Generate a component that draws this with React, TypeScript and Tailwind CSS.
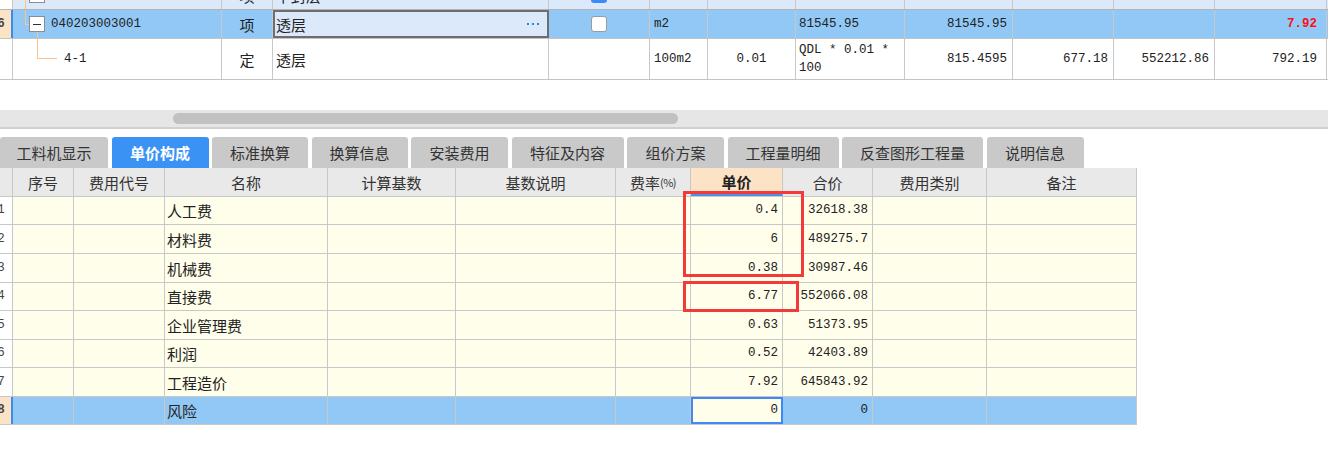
import React from "react";

const MONO = "font-['Liberation_Mono','Noto_Sans_CJK_SC',monospace] text-[12.5px]";
const BR = "border-r border-[#c8c8c8]";

function TreeSvg({ kind }: { kind: 0 | 1 | 2 }) {
  const c = "#f8c68c";
  if (kind === 2)
    return (
      <svg width="51" height="40" className="shrink-0">
        <path d="M24.5 0 V19.5 H44" stroke={c} fill="none" />
      </svg>
    );
  return (
    <svg width="38" height="28" className="shrink-0">
      <path
        d={kind === 0 ? "M12.5 0 V28 M12.5 14.5 H16" : "M12.5 0 V14.5 H16 M24.5 22 V28"}
        stroke={c}
        fill="none"
      />
      <rect x="16.5" y="6.5" width="15" height="15" fill="#fff" stroke="#8c8c8c" />
      <path d="M20 14.5 H28" stroke="#333" />
    </svg>
  );
}

function Idx({ n, sel }: { n: string; sel?: boolean }) {
  return (
    <div
      className={`w-[13px] shrink-0 overflow-hidden flex items-center ${
        sel ? "bg-[#fde3c6] border-r-2 border-[#3c8cf0] font-bold" : "bg-white " + BR
      }`}
    >
      <div className={`w-[30px] -ml-[14px] shrink-0 text-center text-[#444] ${MONO}`}>{n}</div>
    </div>
  );
}

function TopGrid() {
  return (
    <div className="h-[80px] overflow-hidden">
      <div className="-mt-[19px]">
        {/* row 0 (partially visible) */}
        <div className="flex h-[29px] border-b border-[#b4b4b4] bg-[#dce9fb] text-[15px] leading-none">
          <div className={`w-[13px] shrink-0 bg-white ${BR}`} />
          <div className={`w-[209px] shrink-0 flex items-center ${BR}`}>
            <TreeSvg kind={0} />
          </div>
          <div className={`w-[51px] shrink-0 flex items-center justify-center ${BR}`}>项</div>
          <div className={`w-[276px] shrink-0 flex items-center pl-[3px] ${BR}`}>下封层</div>
          <div className={`w-[101px] shrink-0 flex items-center justify-center ${BR}`}>
            <div className="w-[16px] h-[16px] rounded-[3px] bg-[#3d8af7] flex items-center justify-center">
              <svg width="10" height="10" viewBox="0 0 10 10">
                <path d="M1.5 5 L4 7.5 L8.5 2.5" stroke="#fff" strokeWidth="1.6" fill="none" />
              </svg>
            </div>
          </div>
          <div className={`w-[58px] shrink-0 ${BR}`} />
          <div className={`w-[88px] shrink-0 ${BR}`} />
          <div className={`w-[109px] shrink-0 ${BR}`} />
          <div className={`w-[108px] shrink-0 ${BR}`} />
          <div className={`w-[101px] shrink-0 ${BR}`} />
          <div className={`w-[101px] shrink-0 ${BR}`} />
          <div className={`w-[112px] shrink-0 ${BR}`} />
        </div>

        {/* row 1 (selected) */}
        <div className="flex h-[29px] border-b border-[#c4c4c4] bg-[#91c8f6] text-[15px] leading-none text-[#222]">
          <Idx n="6" sel />
          <div className={`w-[209px] shrink-0 flex items-center ${BR}`}>
            <TreeSvg kind={1} />
            <span className={MONO}>040203003001</span>
          </div>
          <div className={`w-[51px] shrink-0 flex items-center justify-center ${BR}`}>项</div>
          <div className="w-[276px] shrink-0 flex items-center justify-between pl-[1px] pr-[8px] bg-[#dce9fb] border-2 border-[#6e6e6e]">
            <span>透层</span>
            <span className="flex gap-[3px]">
              <span className="w-[2px] h-[2px] bg-[#2f86e0]" />
              <span className="w-[2px] h-[2px] bg-[#2f86e0]" />
              <span className="w-[2px] h-[2px] bg-[#2f86e0]" />
            </span>
          </div>
          <div className={`w-[101px] shrink-0 flex items-center justify-center ${BR}`}>
            <div className="w-[16px] h-[16px] rounded-[3px] bg-white border border-[#9a9a9a]" />
          </div>
          <div className={`w-[58px] shrink-0 flex items-center pl-[4px] ${MONO} ${BR}`}>m2</div>
          <div className={`w-[88px] shrink-0 ${BR}`} />
          <div className={`w-[109px] shrink-0 flex items-center pl-[3px] ${MONO} ${BR}`}>81545.95</div>
          <div className={`w-[108px] shrink-0 flex items-center justify-end pr-[5px] ${MONO} ${BR}`}>81545.95</div>
          <div className={`w-[101px] shrink-0 ${BR}`} />
          <div className={`w-[101px] shrink-0 ${BR}`} />
          <div className={`w-[112px] shrink-0 flex items-center justify-end pr-[9px] font-bold text-[#ff1010] ${MONO} ${BR}`}>
            7.92
          </div>
        </div>

        {/* row 2 */}
        <div className="flex h-[41px] border-b border-[#c4c4c4] bg-white text-[15px] leading-none text-[#222]">
          <Idx n="" />
          <div className={`w-[209px] shrink-0 flex items-center ${BR}`}>
            <TreeSvg kind={2} />
            <span className={MONO}>4-1</span>
          </div>
          <div className={`w-[51px] shrink-0 flex items-center justify-center ${BR}`}>定</div>
          <div className={`w-[276px] shrink-0 flex items-center pl-[3px] ${BR}`}>透层</div>
          <div className={`w-[101px] shrink-0 ${BR}`} />
          <div className={`w-[58px] shrink-0 flex items-center pl-[4px] ${MONO} ${BR}`}>100m2</div>
          <div className={`w-[88px] shrink-0 flex items-center justify-center ${MONO} ${BR}`}>0.01</div>
          <div className={`w-[109px] shrink-0 flex flex-col justify-center pl-[3px] leading-[18px] ${MONO} ${BR}`}>
            <span>QDL * 0.01 *</span>
            <span>100</span>
          </div>
          <div className={`w-[108px] shrink-0 flex items-center justify-end pr-[5px] ${MONO} ${BR}`}>815.4595</div>
          <div className={`w-[101px] shrink-0 flex items-center justify-end pr-[5px] ${MONO} ${BR}`}>677.18</div>
          <div className={`w-[101px] shrink-0 flex items-center justify-end pr-[5px] ${MONO} ${BR}`}>552212.86</div>
          <div className={`w-[112px] shrink-0 flex items-center justify-end pr-[9px] ${MONO} ${BR}`}>792.19</div>
        </div>
      </div>
    </div>
  );
}

const tabs: { t: string; w: string; active?: boolean }[] = [
  { t: "工料机显示", w: "w-[108px]" },
  { t: "单价构成", w: "w-[97px]", active: true },
  { t: "标准换算", w: "w-[96px]" },
  { t: "换算信息", w: "w-[96px]" },
  { t: "安装费用", w: "w-[97px]" },
  { t: "特征及内容", w: "w-[112px]" },
  { t: "组价方案", w: "w-[97px]" },
  { t: "工程量明细", w: "w-[111px]" },
  { t: "反查图形工程量", w: "w-[141px]" },
  { t: "说明信息", w: "w-[97px]" },
];

function Tabs() {
  return (
    <div className="flex h-[31px] gap-[3.5px]">
      {tabs.map((tb) => (
        <div
          key={tb.t}
          className={`${tb.w} shrink-0 rounded-t-[3px] flex items-center justify-center text-[15px] leading-none ${
            tb.active ? "bg-[#3b92f5] text-white font-bold" : "bg-[#c9c9c9] text-[#333]"
          }`}
        >
          {tb.t}
        </div>
      ))}
    </div>
  );
}

const bCols = [
  "w-[13px]",
  "w-[61px]",
  "w-[91px]",
  "w-[163px]",
  "w-[128px]",
  "w-[160px]",
  "w-[75px]",
  "w-[92px]",
  "w-[90px]",
  "w-[114px]",
  "w-[150px]",
];

const rowH = ["h-[28px]", "h-[29px]", "h-[29px]", "h-[28px]", "h-[29px]", "h-[28px]", "h-[29px]", "h-[28px]"];

const rows = [
  ["1", "人工费", "0.4", "32618.38"],
  ["2", "材料费", "6", "489275.7"],
  ["3", "机械费", "0.38", "30987.46"],
  ["4", "直接费", "6.77", "552066.08"],
  ["5", "企业管理费", "0.63", "51373.95"],
  ["6", "利润", "0.52", "42403.89"],
  ["7", "工程造价", "7.92", "645843.92"],
  ["8", "风险", "0", "0"],
];

function BottomGrid() {
  return (
    <div className="w-[1137px]">
      <div className="flex h-[29px] bg-[#e9e9e9] border-b border-[#c8c8c8] text-[15px] leading-none text-[#333]">
        <div className={`${bCols[0]} shrink-0 ${BR}`} />
        <div className={`${bCols[1]} shrink-0 flex items-center justify-center ${BR}`}>序号</div>
        <div className={`${bCols[2]} shrink-0 flex items-center justify-center ${BR}`}>费用代号</div>
        <div className={`${bCols[3]} shrink-0 flex items-center justify-center ${BR}`}>名称</div>
        <div className={`${bCols[4]} shrink-0 flex items-center justify-center ${BR}`}>计算基数</div>
        <div className={`${bCols[5]} shrink-0 flex items-center justify-center ${BR}`}>基数说明</div>
        <div className={`${bCols[6]} shrink-0 flex items-center justify-center ${BR}`}>
          费率<span className="text-[11px] tracking-[-0.5px]">(%)</span>
        </div>
        <div
          className={`${bCols[7]} shrink-0 flex items-center justify-center bg-[#fde3c6] font-bold text-[#222] border-b-[3px] border-b-[#4a92e8] pt-[2px] ${BR}`}
        >
          单价
        </div>
        <div className={`${bCols[8]} shrink-0 flex items-center justify-center ${BR}`}>合价</div>
        <div className={`${bCols[9]} shrink-0 flex items-center justify-center ${BR}`}>费用类别</div>
        <div className={`${bCols[10]} shrink-0 flex items-center justify-center ${BR}`}>备注</div>
      </div>
      {rows.map((r, i) => {
        const sel = i === 7;
        return (
          <div
            key={r[0]}
            className={`flex ${rowH[i]} border-b border-[#c8c8c8] text-[15px] leading-none text-[#222] ${
              sel ? "bg-[#91c8f6]" : "bg-[#fffeeb]"
            }`}
          >
            <Idx n={r[0]} sel={sel} />
            <div className={`${bCols[1]} shrink-0 ${BR}`} />
            <div className={`${bCols[2]} shrink-0 ${BR}`} />
            <div className={`${bCols[3]} shrink-0 flex items-center pl-[2px] ${BR}`}>{r[1]}</div>
            <div className={`${bCols[4]} shrink-0 ${BR}`} />
            <div className={`${bCols[5]} shrink-0 ${BR}`} />
            <div className={`${bCols[6]} shrink-0 ${BR}`} />
            {sel ? (
              <div className={`${bCols[7]} shrink-0 flex items-center justify-end pr-[3px] bg-[#fffeeb] border-2 border-[#3d8af7] ${MONO}`}>
                {r[2]}
              </div>
            ) : (
              <div className={`${bCols[7]} shrink-0 flex items-center justify-end pr-[4px] ${MONO} ${BR}`}>{r[2]}</div>
            )}
            <div className={`${bCols[8]} shrink-0 flex items-center justify-end pr-[4px] ${MONO} ${BR}`}>{r[3]}</div>
            <div className={`${bCols[9]} shrink-0 ${BR}`} />
            <div className={`${bCols[10]} shrink-0 ${BR}`} />
          </div>
        );
      })}
    </div>
  );
}

export default function App() {
  return (
    <div className="relative w-[1328px] h-[460px] overflow-hidden bg-white text-[#222] font-['Noto_Sans_CJK_SC',sans-serif]">
      <TopGrid />
      <div className="h-[30px]" />
      <div className="h-[17px] bg-[#e6e6e6] flex items-center pl-[173px]">
        <div className="w-[505px] h-[11px] rounded-full bg-[#c1c1c1]" />
      </div>
      <div className="h-[2px] bg-[#d0d0d0]" />
      <div className="h-[8px]" />
      <Tabs />
      <BottomGrid />
      <div className="absolute left-[683px] top-[191px] w-[121px] h-[86px] border-[3px] border-[#f23a3a]" />
      <div className="absolute left-[683px] top-[281px] w-[116px] h-[31px] border-[3px] border-[#f23a3a]" />
    </div>
  );
}
